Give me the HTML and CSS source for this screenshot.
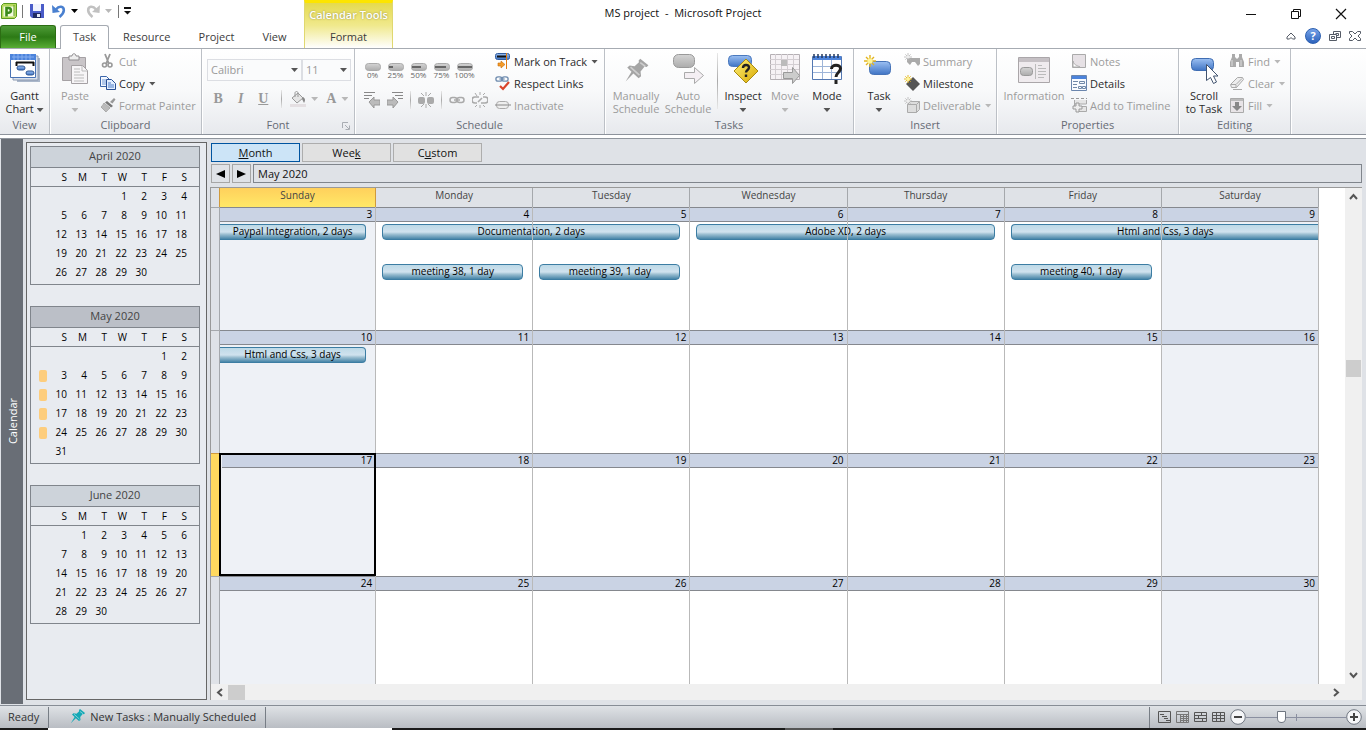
FILE: index.html
```html
<!DOCTYPE html>
<html lang="en">
<head>
<meta charset="utf-8">
<title>MS project - Microsoft Project</title>
<link rel="stylesheet" href="styles.css">
</head>
<body>
<svg class="defs" width="0" height="0" aria-hidden="true">
  <defs>
    <linearGradient id="blue" x1="0" y1="0" x2="0" y2="1"><stop offset="0" stop-color="#9cc0f2"/><stop offset="1" stop-color="#3f74c4"/></linearGradient>
    <linearGradient id="grey" x1="0" y1="0" x2="0" y2="1"><stop offset="0" stop-color="#d4d4d4"/><stop offset="1" stop-color="#acacac"/></linearGradient>
    <linearGradient id="gold" x1="0" y1="0" x2="1" y2="1"><stop offset="0" stop-color="#fff27a"/><stop offset="1" stop-color="#d8a800"/></linearGradient>
    <symbol id="spark" viewBox="0 0 12 12"><path d="M6 0v12M0 6h12M2 2l8 8M10 2l-8 8" stroke="#e3b51d" stroke-width="1.4"/><circle cx="6" cy="6" r="2.6" fill="#fff799"/></symbol>
    <symbol id="spark-off" viewBox="0 0 12 12"><path d="M6 0v12M0 6h12M2 2l8 8M10 2l-8 8" stroke="#b5b5b5" stroke-width="1.2"/><circle cx="6" cy="6" r="2.4" fill="#eee"/></symbol>
    <symbol id="pin" viewBox="0 0 16 16"><path d="M10 1l5 4-1 1.200-1.300-.3-2.500 3 .3 3-1.500 1.100L5.800 10.200 1 15l3.600-6L2 6.500l1.500-1.200 3 .4 2.700-2.400-.2-1.200z" fill="currentColor"/><path d="M10 3.500l3 2.200M4 6.200l5.500 5" stroke="#fff" stroke-opacity=".45" fill="none"/></symbol>
    <symbol id="chain" viewBox="0 0 16 8"><rect x="1" y="1.500" width="7" height="5" rx="2.500" fill="none" stroke="currentColor" stroke-width="1.500"/><rect x="8" y="1.500" width="7" height="5" rx="2.500" fill="none" stroke="currentColor" stroke-width="1.500"/><path d="M5 4h6" stroke="currentColor" stroke-width="1.500"/></symbol>
  </defs>
</svg>

<header class="header">
  <div class="quick-access">
    <svg width="16" height="16"><path d="M.5 2.500l2-2h13v13l-2 2H.5z" fill="#b5d95c" stroke="#5b9a1f"/><path d="M2.500 3.500h11v10h-11z" fill="#f3fae0"/><path d="M13 2v11" stroke="#5b9a1f"/><path d="M5.500 13.500V5h2a2.400 2.400 0 010 4.800H6" fill="none" stroke="#3b8a1b" stroke-width="2.600"/></svg>
    <i class="tick-sep"></i>
    <button aria-label="Save" class="save"><svg width="14" height="14"><path d="M0 0h14v14H2l-2-2z" fill="#4a5cc8"/><path d="M3 0h8v7H3z" fill="#f1f4fd"/><path d="M3 9h8v5H3z" fill="#202b63"/><path d="M7 10h3v3H7z" fill="#e5e9f5"/></svg></button>
    <button aria-label="Undo" class="gap-l"><svg width="14" height="14"><path d="M4 5.500C7 1.500 12 2 11.800 6.500c-.2 3-1.800 4.500-4.300 6.500" fill="none" stroke="#4a80d0" stroke-width="2.600"/><path d="M0 1l.5 8 7.500-1z" fill="#4a80d0"/></svg></button>
    <i class="arrow black"></i>
    <button aria-label="Redo" class="gap-l"><svg width="14" height="14"><path d="M10 5.500C7 1.500 2 2 2.200 6.500c.2 3 1.800 4.500 4.300 6.500" fill="none" stroke="#c1c1c1" stroke-width="2.600"/><path d="M14 1l-.5 8L6 8z" fill="#c1c1c1"/></svg></button>
    <i class="arrow pale"></i>
    <i class="tick-sep"></i>
    <button aria-label="Customize"><svg width="7" height="8"><path d="M0 1h7" stroke="#111" stroke-width="2"/><path d="M0 4h7L3.500 7.500z" fill="#111"/></svg></button>
  </div>
  <nav class="tabs">
    <button class="tab file">File</button>
    <button class="tab active">Task</button>
    <button class="tab">Resource</button>
    <button class="tab">Project</button>
    <button class="tab">View</button>
  </nav>
  <div class="context">
    <span class="context-title">Calendar Tools</span>
    <button class="tab">Format</button>
  </div>
  <h1 class="title">MS project&nbsp; -&nbsp; Microsoft Project</h1>
  <div class="window-buttons">
    <button aria-label="Minimize"><svg width="12" height="12"><path d="M1 6.500h10" stroke="#111"/></svg></button>
    <button aria-label="Restore"><svg width="12" height="12"><path d="M1.500 3.500h7v7h-7zM3.500 3.500v-2h7v7h-2" fill="none" stroke="#111"/></svg></button>
    <button aria-label="Close"><svg width="12" height="12"><path d="M1 1l10 10M11 1L1 11" stroke="#111" stroke-width="1.200"/></svg></button>
  </div>
  <div class="help-buttons">
    <button aria-label="Minimize ribbon"><svg width="12" height="12"><path d="M2 7l4-4 4 4v2H7.500L6 7.500 4.500 9H2z" fill="none" stroke="#555b66"/></svg></button>
    <button class="help" aria-label="Help">?</button>
    <button aria-label="Restore window"><svg width="12" height="12"><path d="M.5 4.500h7v6h-7zM2.500 6.500h3v2h-3zM4.500 4.500v-3h7v6h-4M6.500 3.500h3v2h-2" fill="none" stroke="#555b66"/></svg></button>
    <button aria-label="Close window"><svg width="12" height="12"><path d="M.5 1.500h3L6 4l2.500-2.500h3v2L9 6l2.500 2.500v2h-3L6 8l-2.500 2.500h-3v-2L3 6 .5 3.500z" fill="none" stroke="#555b66"/></svg></button>
  </div>
</header>

<section class="ribbon" aria-label="Task ribbon">
  <div class="group g-view">
    <div class="tools">
      <button class="large"><svg width="32" height="32"><path d="M8 5h23v24H8z" fill="#aab7ca"/><path d="M4 3h25v24H4z" fill="#dce3ee" stroke="#8c9ab0"/><path d="M1.500 1.500h25v23h-25z" fill="#fff" stroke="#4a73b4"/><path d="M1 1h26v6H1z" fill="#4c83db"/><path d="M5 1v6M9 1v6M13 1v6M17 1v6M21 1v6M3 4h22" stroke="#83adf0"/><path d="M7 9.500h18M7.500 9v4M24.500 9v4" stroke="#111" stroke-width="2"/><rect x="8" y="13" width="8" height="4" rx="2" fill="url(#blue)" stroke="#2d5592"/><rect x="17" y="18" width="8" height="4" rx="2" fill="url(#blue)" stroke="#2d5592"/></svg><span>Gantt<br>Chart <i class="arrow"></i></span></button>
    </div>
    <h2>View</h2>
  </div>

  <div class="group g-clip">
    <div class="tools">
      <button class="large off" disabled><svg width="32" height="32"><path d="M3.500 4.500h23v23h-23z" fill="#c9c5c8" stroke="#a5a1a4"/><path d="M10 7V3h3c0-3 4-3 4 0h3v4z" fill="#eee" stroke="#8f8c8f"/><path d="M12.500 12.500h11l5 5v13h-16z" fill="#f7f5f7" stroke="#a5a1a4"/><path d="M23 13v5h5M15 16h6M15 19h6M15 22h10M15 25h10M15 28h10" fill="none" stroke="#bbb"/></svg><span>Paste<br><i class="arrow pale"></i></span></button>
      <div class="stack">
        <button class="small off" disabled><svg width="16" height="16"><path d="M5 1l4 10M10 1L6 11" stroke="#999" stroke-width="1.800"/><circle cx="4.500" cy="12" r="2" fill="none" stroke="#999" stroke-width="1.600"/><circle cx="10" cy="12" r="2" fill="none" stroke="#999" stroke-width="1.600"/></svg>Cut</button>
        <button class="small"><svg width="16" height="16"><path d="M.5 1.500h6l3 3v7h-9z" fill="#f4f8ff" stroke="#3b66ab"/><path d="M2 5h4M2 7h4M2 9h4" stroke="#7199d6"/><path d="M6.500 4.500h5l4 4v6h-9z" fill="#e3eeff" stroke="#284f94"/><path d="M8 8h3M8 10h6M8 12h6" stroke="#4d7cc7"/></svg>Copy <i class="arrow"></i></button>
        <button class="small off" disabled><svg width="16" height="16"><path d="M10 5l4-4 1.500 1.500-3 4z" fill="#999"/><path d="M7 4l6 5-2 1.500-6-5z" fill="#777"/><path d="M4 6l6 5c-2 2-3 3-4 4L1 10c1-1 2-2 3-4z" fill="#bbb" stroke="#aaa"/></svg>Format Painter</button>
      </div>
    </div>
    <h2>Clipboard</h2>
  </div>

  <div class="group g-font">
    <div class="tools column">
      <div class="combos">
        <label class="combo wide"><select aria-label="Font" disabled><option>Calibri</option></select><i class="arrow"></i></label>
        <label class="combo"><select aria-label="Font size" disabled><option>11</option></select><i class="arrow"></i></label>
      </div>
      <div class="format-row">
        <button class="letter bold" disabled>B</button>
        <button class="letter italic" disabled>I</button>
        <button class="letter underline" disabled>U</button>
        <i class="fade-sep"></i>
        <button class="with-arrow" disabled aria-label="Background color"><svg width="16" height="16"><path d="M2 7l6-5 5 5-6 5z" fill="#e5e5e5" stroke="#999"/><path d="M5 6V2c0-2 3-2 3 0v4" fill="none" stroke="#999"/><path d="M13 6c3 2 2 4 1 6l-2-4z" fill="#888"/><path d="M0 13h16v3H0z" fill="#e4dfe2"/></svg><i class="arrow pale"></i></button>
        <button class="with-arrow letter" disabled>A<i class="arrow pale"></i></button>
      </div>
    </div>
    <h2>Font <svg class="launcher" width="8" height="8"><path d="M.5 6V.5H6M3 3l4 4M7.500 3.500v4h-4" fill="none" stroke="#a9adb3"/></svg></h2>
  </div>

  <div class="group g-schedule">
    <div class="tools">
      <div class="schedule-tools">
        <div class="percents">
          <button disabled><svg width="16" height="8"><rect x=".5" y=".5" width="15" height="7" rx="3" fill="url(#grey)" stroke="#aaa"/></svg>0%</button>
          <button disabled><svg width="16" height="8"><rect x=".5" y=".5" width="15" height="7" rx="3" fill="url(#grey)" stroke="#aaa"/><path d="M1 4h4" stroke="#666" stroke-width="2"/></svg>25%</button>
          <button disabled><svg width="16" height="8"><rect x=".5" y=".5" width="15" height="7" rx="3" fill="url(#grey)" stroke="#aaa"/><path d="M1 4h9" stroke="#666" stroke-width="2"/></svg>50%</button>
          <button disabled><svg width="16" height="8"><rect x=".5" y=".5" width="15" height="7" rx="3" fill="url(#grey)" stroke="#aaa"/><path d="M1 4h11" stroke="#666" stroke-width="2"/></svg>75%</button>
          <button disabled><svg width="16" height="8"><rect x=".5" y=".5" width="15" height="7" rx="3" fill="url(#grey)" stroke="#aaa"/><path d="M1 4h14" stroke="#666" stroke-width="2"/></svg>100%</button>
        </div>
        <div class="link-row">
          <button disabled aria-label="Outdent"><svg width="16" height="16"><path d="M0 .5h11M0 3.500h8M0 6.500h5" stroke="#888"/><path d="M5 10l5-5v3h6v5h-6v3z" fill="#bbb" stroke="#999"/></svg></button>
          <button disabled aria-label="Indent"><svg width="16" height="16"><path d="M5 .5h11M8 3.500h8M11 6.500h5" stroke="#888"/><path d="M11 10L6 5v3H0v5h6v3z" fill="#bbb" stroke="#999"/></svg></button>
          <i class="fade-sep"></i>
          <button disabled aria-label="Split task"><svg width="16" height="16"><rect x="0" y="5" width="7" height="7" rx="2" fill="#aaa"/><rect x="9" y="5" width="7" height="7" rx="2" fill="#aaa"/><path d="M8 0v4M8 12v4M3 1l3 3M13 1l-3 3M3 15l3-3M13 15l-3-3" stroke="#aaa"/></svg></button>
          <i class="fade-sep"></i>
          <button disabled aria-label="Link tasks"><svg width="16" height="8" color="#aaa"><use href="#chain"/></svg></button>
          <button disabled aria-label="Unlink tasks"><svg width="16" height="16" fill="none" stroke="#aaa"><path d="M7 5H3a2.500 2.500 0 000 6h2M9 11h4a2.500 2.500 0 000-6h-2M6 10l4-4" stroke-width="1.600"/><path d="M8 0v3M8 13v3M3 1l2 3M13 1l-2 2M3 15l2-2M13 15l-2-2"/></svg></button>
        </div>
      </div>
      <div class="stack">
        <button class="small"><svg width="16" height="16"><rect x=".5" y=".5" width="14" height="6" rx="2" fill="url(#blue)" stroke="#315c9f"/><path d="M2 3.500h9" stroke="#111" stroke-width="2"/><path d="M11.500 0v16" stroke="#e07b12"/><path d="M3 10h3V8l4 3.500L6 15v-2H3z" fill="#f49b28" stroke="#c86b08" stroke-width=".6"/></svg>Mark on Track <i class="arrow"></i></button>
        <button class="small"><svg width="16" height="16"><svg width="14" height="8" color="#6f8caf"><use href="#chain"/></svg><path d="M5 11l3 3 6-7" fill="none" stroke="#d9442a" stroke-width="2.200"/></svg>Respect Links</button>
        <button class="small off" disabled><svg width="16" height="16"><rect x="1.500" y="4.500" width="12" height="7" rx="3" fill="#eee" stroke="#aaa"/><path d="M0 8h16" stroke="#888"/></svg>Inactivate</button>
      </div>
    </div>
    <h2>Schedule</h2>
  </div>

  <div class="group g-tasks">
    <div class="tools">
      <button class="large mid off" disabled><svg width="32" height="32"><svg x="4" y="4" width="26" height="26" color="#a5a5a5"><use href="#pin"/></svg></svg><span>Manually<br>Schedule</span></button>
      <button class="large mid off" disabled><svg width="32" height="32"><rect x="1.500" y="1.500" width="21" height="13" rx="5" fill="url(#grey)" stroke="#999"/><path d="M12.500 19.500h10v-5l9 8-9 8v-5h-10z" fill="#f4eff3" stroke="#aaa"/></svg><span>Auto<br>Schedule</span></button>
      <i class="fade-sep tall"></i>
      <button class="large"><svg width="32" height="32"><rect x="1.500" y="2.500" width="23" height="11" rx="4" fill="url(#blue)" stroke="#4a79be"/><path d="M19 6l12 12-12 12L7 18z" fill="url(#gold)" stroke="#a88a12"/><path d="M16 15c0-4 6-4 6-.5 0 2.500-3 2.500-3 5M19 21.500v2.500" fill="none" stroke="#222" stroke-width="2.400"/></svg><span>Inspect<br><i class="arrow"></i></span></button>
      <button class="large off" disabled><svg width="32" height="32"><path d="M1.500 1.500h29v25h-29z" fill="#f6f2f5" stroke="#b5b0b4"/><path d="M1 6.500h29M1 11.500h29M1 16.500h29M1 21.500h29M6.500 1v25M12.500 1v25M18.500 1v25M24.500 1v25" stroke="#d3ced2"/><path d="M12 7h6v6h-6z" fill="#bbb"/><path d="M14.500 19.500h9v-5l7 8-7 8v-5h-9z" fill="#ccc" stroke="#999"/></svg><span>Move<br><i class="arrow pale"></i></span></button>
      <button class="large"><svg width="32" height="32"><path d="M1.500 3.500h29v23h-29z" fill="#fff" stroke="#5478b1"/><path d="M2 3h28v4H2z" fill="#4c83db"/><path d="M2 13.500h28M2 19.500h28M11.500 7v19M20.500 7v19" stroke="#9eb5d8"/><path d="M3 1v4M7 1v4M11 1v4M15 1v4M19 1v4M23 1v4M27 1v4" stroke="#23395e" stroke-width="1.500"/><path d="M20.500 16c0-5 9-5 9-.5 0 4-4.500 4-4.500 8.500M25 27v4" fill="none" stroke="#222" stroke-width="3"/></svg><span>Mode<br><i class="arrow"></i></span></button>
    </div>
    <h2>Tasks</h2>
  </div>

  <div class="group g-insert">
    <div class="tools">
      <button class="large"><svg width="32" height="32"><rect x="6.500" y="8.500" width="21" height="13" rx="4" fill="url(#blue)" stroke="#4673b7"/><svg x="1" y="2" width="12" height="12"><use href="#spark"/></svg></svg><span>Task<br><i class="arrow"></i></span></button>
      <div class="stack">
        <button class="small off" disabled><svg width="16" height="16"><path d="M3 5h13v6l-2 2-3-4H8l-2 3-3-3z" fill="#aaa"/><svg width="8" height="8"><use href="#spark-off"/></svg></svg>Summary</button>
        <button class="small"><svg width="16" height="16"><path d="M9 2l7 7-7 7-7-7z" fill="#555"/><svg width="8" height="8"><use href="#spark"/></svg></svg>Milestone</button>
        <button class="small off" disabled><svg width="16" height="16"><path d="M3.500 7.500h9v8h-9zM3.500 7.500l3-3h9v8l-3 3M12.500 7.500l3-3" fill="#ddd" stroke="#aaa"/><svg width="8" height="8"><use href="#spark-off"/></svg></svg>Deliverable <i class="arrow pale"></i></button>
      </div>
    </div>
    <h2>Insert</h2>
  </div>

  <div class="group g-props">
    <div class="tools">
      <button class="large mid off" disabled><svg width="32" height="32"><path d="M.5 4.500h31v25H.5z" fill="#efebee" stroke="#aaa6a9"/><path d="M1 5h30v4H1z" fill="#c5c0c4"/><rect x="2.500" y="14.500" width="12" height="8" rx="3" fill="url(#grey)" stroke="#999"/><path d="M17.500 11v15M20 12.500h4M20 15.500h8M20 18.500h8M20 21.500h8M20 24.500h6" stroke="#bbb"/></svg><span>Information</span></button>
      <div class="stack">
        <button class="small off" disabled><svg width="16" height="16"><path d="M1.500 1.500h13v13h-13z" fill="#e6e1e5" stroke="#aaa"/><path d="M2 8c1 4 3 4 7 6H2z" fill="#fff" stroke="#aaa"/></svg>Notes</button>
        <button class="small"><svg width="16" height="16"><path d="M.5.5h15v15H.5z" fill="#f8fbff" stroke="#6b86ad"/><path d="M1 1h14v3H1z" fill="#4c83db"/><path d="M2 6.500h5M2 9.500h4M2 12.500h4M8.500 6.500h5v2h-5zM7.500 11.500h3v2h-3zM11.500 11.500h3v2h-3z" fill="none" stroke="#7189a8"/></svg>Details</button>
        <button class="small off" disabled><svg width="16" height="16"><path d="M0 1.500h16" stroke="#999" stroke-dasharray="3 2"/><path d="M3.500 3v4h12V3M3.500 7v3M6.500 9.500h9v5h-9z" fill="#e5e5e5" stroke="#aaa"/><path d="M5 6h3v3h3v3H8v3H5v-3H2V9h3z" fill="#eee" stroke="#999"/></svg>Add to Timeline</button>
      </div>
    </div>
    <h2>Properties</h2>
  </div>

  <div class="group g-edit">
    <div class="tools">
      <button class="large"><svg width="32" height="32"><rect x="3.500" y="5.500" width="22" height="12" rx="4" fill="url(#blue)" stroke="#3f6db2"/><path d="M18.500 11.500v16l4-3 3 6 3-1.500-3-6h4.500z" fill="#fff" stroke="#41536e"/></svg><span>Scroll<br>to Task</span></button>
      <div class="stack">
        <button class="small off" disabled><svg width="16" height="16"><path d="M3 1h3v3l2 2 2-2V1h3v3l2 5v5h-5V9H7v5H1V9l2-5z" fill="#aaa"/><path d="M3 7v6M12 7v6" stroke="#ddd"/></svg>Find <i class="arrow pale"></i></button>
        <button class="small off" disabled><svg width="16" height="16"><path d="M1.500 9.500l7-7h5l1 2-7 8h-5z" fill="#eee" stroke="#aaa"/><path d="M2 9.500h5l6-6M7 10v3M4 14.500h9" fill="none" stroke="#aaa"/></svg>Clear <i class="arrow pale"></i></button>
        <button class="small off" disabled><svg width="16" height="16"><path d="M1.500 1.500h13v14h-13z" fill="#e8e4e7" stroke="#aaa"/><path d="M2 2h12v2H2z" fill="#bbb"/><path d="M6 5h4v4h3l-5 5-5-5h3z" fill="#888"/></svg>Fill <i class="arrow pale"></i></button>
      </div>
    </div>
    <h2>Editing</h2>
  </div>
</section>

<main class="workspace">
  <div class="view-bar"><span>Calendar</span></div>
  <aside class="months">
    <table class="month">
      <caption>April 2020</caption>
      <thead><tr><th></th><th>S</th><th>M</th><th>T</th><th>W</th><th>T</th><th>F</th><th>S</th></tr></thead>
      <tbody>
        <tr><td></td><td></td><td></td><td></td><td>1</td><td>2</td><td>3</td><td>4</td></tr>
        <tr><td></td><td>5</td><td>6</td><td>7</td><td>8</td><td>9</td><td>10</td><td>11</td></tr>
        <tr><td></td><td>12</td><td>13</td><td>14</td><td>15</td><td>16</td><td>17</td><td>18</td></tr>
        <tr><td></td><td>19</td><td>20</td><td>21</td><td>22</td><td>23</td><td>24</td><td>25</td></tr>
        <tr><td></td><td>26</td><td>27</td><td>28</td><td>29</td><td>30</td><td></td><td></td></tr>
      </tbody>
    </table>
    <table class="month current">
      <caption>May 2020</caption>
      <thead><tr><th></th><th>S</th><th>M</th><th>T</th><th>W</th><th>T</th><th>F</th><th>S</th></tr></thead>
      <tbody>
        <tr><td></td><td></td><td></td><td></td><td></td><td></td><td>1</td><td>2</td></tr>
        <tr><td><i class="mark"></i></td><td>3</td><td>4</td><td>5</td><td>6</td><td>7</td><td>8</td><td>9</td></tr>
        <tr><td><i class="mark"></i></td><td>10</td><td>11</td><td>12</td><td>13</td><td>14</td><td>15</td><td>16</td></tr>
        <tr><td><i class="mark"></i></td><td>17</td><td>18</td><td>19</td><td>20</td><td>21</td><td>22</td><td>23</td></tr>
        <tr><td><i class="mark"></i></td><td>24</td><td>25</td><td>26</td><td>27</td><td>28</td><td>29</td><td>30</td></tr>
        <tr><td></td><td>31</td><td></td><td></td><td></td><td></td><td></td><td></td></tr>
      </tbody>
    </table>
    <table class="month">
      <caption>June 2020</caption>
      <thead><tr><th></th><th>S</th><th>M</th><th>T</th><th>W</th><th>T</th><th>F</th><th>S</th></tr></thead>
      <tbody>
        <tr><td></td><td></td><td>1</td><td>2</td><td>3</td><td>4</td><td>5</td><td>6</td></tr>
        <tr><td></td><td>7</td><td>8</td><td>9</td><td>10</td><td>11</td><td>12</td><td>13</td></tr>
        <tr><td></td><td>14</td><td>15</td><td>16</td><td>17</td><td>18</td><td>19</td><td>20</td></tr>
        <tr><td></td><td>21</td><td>22</td><td>23</td><td>24</td><td>25</td><td>26</td><td>27</td></tr>
        <tr><td></td><td>28</td><td>29</td><td>30</td><td></td><td></td><td></td><td></td></tr>
      </tbody>
    </table>
  </aside>

  <section class="calendar">
    <div class="modes">
      <button class="selected"><u>M</u>onth</button>
      <button>Wee<u>k</u></button>
      <button>C<u>u</u>stom</button>
    </div>
    <div class="period">
      <button aria-label="Previous month"><svg width="9" height="8"><path d="M9 0v8L0 4z"/></svg></button>
      <button aria-label="Next month"><svg width="9" height="8"><path d="M0 0v8l9-4z"/></svg></button>
      <div class="period-name">May 2020</div>
    </div>
    <div class="sheet">
      <div class="grid">
        <div class="weekdays">
          <span class="today">Sunday</span><span>Monday</span><span>Tuesday</span><span>Wednesday</span><span>Thursday</span><span>Friday</span><span>Saturday</span>
        </div>
        <div class="week">
          <div class="day weekend d1"><b>3</b></div><div class="day d2"><b>4</b></div><div class="day d3"><b>5</b></div><div class="day d4"><b>6</b></div><div class="day d5"><b>7</b></div><div class="day d6"><b>8</b></div><div class="day weekend d7"><b>9</b></div>
          <div class="event from-prev at-sun">Paypal Integration, 2 days</div>
          <div class="event at-mon span-2">Documentation, 2 days</div>
          <div class="event at-wed span-2">Adobe XD, 2 days</div>
          <div class="event to-next at-fri span-2">Html and Css, 3 days</div>
          <div class="event second at-mon">meeting 38, 1 day</div>
          <div class="event second at-tue">meeting 39, 1 day</div>
          <div class="event second at-fri">meeting 40, 1 day</div>
        </div>
        <div class="week">
          <div class="day weekend d1"><b>10</b></div><div class="day d2"><b>11</b></div><div class="day d3"><b>12</b></div><div class="day d4"><b>13</b></div><div class="day d5"><b>14</b></div><div class="day d6"><b>15</b></div><div class="day weekend d7"><b>16</b></div>
          <div class="event from-prev at-sun">Html and Css, 3 days</div>
        </div>
        <div class="week chosen">
          <div class="day weekend d1 picked"><b>17</b></div><div class="day d2"><b>18</b></div><div class="day d3"><b>19</b></div><div class="day d4"><b>20</b></div><div class="day d5"><b>21</b></div><div class="day d6"><b>22</b></div><div class="day weekend d7"><b>23</b></div>
        </div>
        <div class="week last">
          <div class="day weekend d1"><b>24</b></div><div class="day d2"><b>25</b></div><div class="day d3"><b>26</b></div><div class="day d4"><b>27</b></div><div class="day d5"><b>28</b></div><div class="day d6"><b>29</b></div><div class="day weekend d7"><b>30</b></div>
        </div>
      </div>
      <div class="v-scroll">
        <button aria-label="Scroll up"><svg width="9" height="7"><path d="M1 6l3.500-4L8 6" fill="none" stroke="#555" stroke-width="2"/></svg></button>
        <i class="thumb"></i>
        <button aria-label="Scroll down"><svg width="9" height="7"><path d="M1 1l3.500 4L8 1" fill="none" stroke="#555" stroke-width="2"/></svg></button>
      </div>
      <div class="h-scroll">
        <button aria-label="Scroll left"><svg width="7" height="9"><path d="M6 1L2 4.500 6 8" fill="none" stroke="#555" stroke-width="2"/></svg></button>
        <i class="thumb"></i>
        <button aria-label="Scroll right" class="end"><svg width="7" height="9"><path d="M1 1l4 3.500L1 8" fill="none" stroke="#555" stroke-width="2"/></svg></button>
      </div>
    </div>
  </section>
</main>

<footer class="status">
  <span class="ready">Ready</span>
  <button class="task-mode"><svg width="16" height="16" color="#15a8b5"><use href="#pin"/></svg>New Tasks : Manually Scheduled</button>
  <div class="view-buttons">
    <button aria-label="Gantt chart"><svg width="13" height="12"><path d="M.5.5h12v11H.5zM2 3.500h4M4 5.500h5M6 7.500h4M8 9.500h4" fill="none" stroke="#555"/></svg></button>
    <button aria-label="Task usage"><svg width="13" height="12"><path d="M.5.5h12v11H.5zM0 3.500h13M4.500 3v8M7.500 3v8M10.500 3v8M4 5.500h9M4 7.500h9M4 9.500h9" fill="none" stroke="#777"/></svg></button>
    <button aria-label="Team planner"><svg width="13" height="12"><path d="M.5 1.500h12v9H.5zM0 4.500h13M0 7.500h13M7.500 2v2M4.500 5v3M8.500 8v2" fill="none" stroke="#555"/></svg></button>
    <button aria-label="Resource sheet"><svg width="13" height="12"><path d="M.5 1.500h12v9H.5zM0 4.500h13M0 7.500h13M4.500 1v9M8.500 1v9" fill="none" stroke="#555"/></svg></button>
  </div>
  <button class="zoom" aria-label="Zoom out"><svg width="16" height="16"><circle cx="8" cy="8" r="7.300" fill="#f5f6f8" stroke="#6f7680"/><path d="M4 8h8" stroke="#444" stroke-width="2"/></svg></button>
  <input class="slider" type="range" aria-label="Zoom" value="34">
  <button class="zoom" aria-label="Zoom in"><svg width="16" height="16"><circle cx="8" cy="8" r="7.300" fill="#f5f6f8" stroke="#6f7680"/><path d="M4 8h8M8 4v8" stroke="#444" stroke-width="2"/></svg></button>
</footer>
<div class="taskbar-edge"></div>
</body>
</html>
```
FILE: styles.css
```css
* { box-sizing: border-box; }
body {
  margin: 0; height: 100vh; overflow: hidden;
  display: flex; flex-direction: column;
  font: 11px/13px "Open Sans", "Noto Sans", sans-serif;
  color: #2b2b2b; background: #fff;
}
button { font: inherit; color: inherit; background: none; border: 0; padding: 0; margin: 0; }
h1, h2 { margin: 0; font: inherit; }
svg { display: block; flex: none; }
.defs { position: absolute; }
i { font-style: normal; }
.arrow {
  display: inline-block; vertical-align: middle; width: 7px; height: 4px; flex: none;
  background: #555; clip-path: polygon(0 0, 100% 0, 50% 100%);
}
.arrow.black { background: #000; }
.arrow.pale { background: #b8b8b8; }

/* Title bar and tabs */
.header {
  flex: none; display: grid;
  grid-template-columns: 304px 89px 1fr; grid-template-rows: 25px 24px;
  border-bottom: 1px solid #a6abb2; height: 49px;
}
.quick-access { grid-area: 1 / 1; display: flex; align-items: center; gap: 5px; padding: 0 1px; height: 22px; }
.quick-access .save { margin: 0 3px 0 2px; }
.quick-access .gap-l:not(:nth-child(4)) { margin-left: 2px; }
.quick-access .arrow { margin-right: 1px; }
.tick-sep { width: 1px; height: 13px; background: #777; }
.tabs { grid-area: 2 / 1; display: flex; }
.tab { height: 23px; padding: 0 14px 1px; color: #3b3b3b; }
.tab.file { width: 56px; padding: 0 0 1px; margin-right: 4px; color: #fff; border: 1px solid #2c6d13; border-bottom: 0; border-radius: 3px 3px 0 0; background: linear-gradient(#4e9b37, #2c7a15 50%, #58ad35); }
.tab.active { width: 49px; height: 24px; padding: 0 0 2px; background: #fff; border: 1px solid #a6abb2; border-bottom: 0; border-radius: 3px 3px 0 0; color: #444; }
.context {
  grid-area: 1 / 2 / 3 / 3; display: flex; flex-direction: column; align-items: center;
  border: solid #e0d870; border-width: 3px 1px 0; border-top-color: #fde500;
  background: linear-gradient(#e5da4e, #f0e98d 50%, #fff); height: 48px;
}
.context-title { height: 22px; line-height: 24px; color: #fff; font-weight: 600; white-space: nowrap; text-shadow: 0 0 2px #8c8742; }
.context .tab { padding: 0 0 1px; }
.title { grid-area: 1 / 1 / 2 / 4; justify-self: center; align-self: center; color: #111; }
.window-buttons { grid-area: 1 / 3; justify-self: end; display: flex; align-items: center; gap: 33px; padding: 3px 19px 0 0; z-index: 1; }
.help-buttons { grid-area: 2 / 3; justify-self: end; display: flex; align-items: center; gap: 8px; padding: 0 5px 2px 0; }
.help { width: 16px; height: 16px; border-radius: 50%; border: 1px solid #2c5fb0; background: linear-gradient(#75a2e8, #2d63bd); color: #fff; font-weight: 700; line-height: 14px; }

/* Ribbon */
.ribbon { flex: none; display: flex; height: 86px; border-bottom: 1px solid #8d939c; background: linear-gradient(#fff, #f8f9fa 50%, #e7e9ed); }
.group { flex: none; display: flex; flex-direction: column; border-right: 1px solid #bcc0c6; box-shadow: 1px 0 #fff; }
.group h2 { height: 17px; text-align: center; color: #666b74; position: relative; line-height: 16px; }
.tools { flex: 1; display: flex; padding-top: 2px; }
.tools.column { flex-direction: column; }
.g-view { width: 50px; }
.g-clip { width: 152px; }
.g-font { width: 153px; }
.g-schedule { width: 250px; }
.g-tasks { width: 249px; }
.g-insert { width: 143px; }
.g-props { width: 182px; }
.g-edit { width: 112px; }
.large { width: 50px; height: 66px; display: flex; flex-direction: column; align-items: center; gap: 4px; padding-top: 2px; white-space: nowrap; }
.g-tasks .large { width: 42px; }
.g-tasks .large.mid { width: 52px; }
.g-tasks .tools { padding-left: 5px; }
.g-props .large.mid { width: 74px; }
.off { color: #9c9c9c; }
.stack { display: flex; flex-direction: column; }
.small { display: flex; align-items: center; gap: 3px; height: 22px; padding-bottom: 2px; white-space: nowrap; }
.small .arrow { margin: 1px 0 0 1px; }
.combos { display: flex; padding: 8px 0 0 5px; }
.combo { position: relative; width: 49px; height: 22px; }
.combo.wide { width: 95px; }
.combo select { width: 100%; height: 22px; padding: 0 3px 2px; appearance: none; border: 1px solid #dcdee3; border-radius: 0; background: #fafbfc; color: #999; opacity: 1; font: inherit; }
.combo .arrow { position: absolute; right: 4px; top: 9px; }
.format-row { display: flex; align-items: center; height: 36px; padding-left: 5px; }
.letter { width: 23px; color: #999; font: 700 14px "Liberation Serif", serif; }
.letter.italic { font-style: italic; }
.letter.underline { text-decoration: underline; }
.with-arrow { display: flex; align-items: center; justify-content: center; gap: 5px; width: 34px; }
.fade-sep { width: 1px; height: 18px; margin: 0 7px; background: linear-gradient(#e8e8e8, #aaa, #e8e8e8); flex: none; }
.fade-sep.tall { height: 56px; margin: 2px 4px 0 3px; }
.format-row .fade-sep { margin: 0 6px; }
.launcher { position: absolute; right: 4px; top: 5px; }
.schedule-tools { width: 140px; }
.percents { display: grid; grid-template-columns: repeat(5, 23px); padding: 12px 0 0 6px; }
.percents button { display: flex; flex-direction: column; align-items: center; color: #666; font-size: 8px; line-height: 8px; }
.link-row { display: flex; align-items: center; gap: 7px; padding: 10px 0 0 9px; height: 32px; }
.link-row .fade-sep { margin: 0; }

/* Work area */
.workspace { flex: 1; min-height: 0; display: flex; margin-top: 3px; padding: 0 4px 5px 1px; border-top: 1px solid #8f959d; background: #dfe2e7; }
.view-bar { width: 22px; margin-bottom: -4px; background: #696e76; color: #fff; display: flex; justify-content: center; align-items: center; }
.view-bar span { writing-mode: vertical-rl; transform: rotate(180deg); }
.months { width: 181px; margin: 3px 0 0 3px; padding: 3px; border: 1px solid #666; background: #e8ebf0; }
.month {
  width: 170px; table-layout: fixed; border-collapse: separate; border-spacing: 0; margin-bottom: 21px;
  border: 1px solid #80858c; padding: 0 12px 2px 0; font-size: 10px; color: #000;
  background: linear-gradient(#80858c, #80858c) 0 18px / 100% 1px no-repeat;
}
.month caption { height: 21px; line-height: 17px; font-size: 11px; color: #444; border: 1px solid #80858c; border-bottom: 0; background: #cdd3da; }
.month.current caption { background: #bbbfc7; }
.month th, .month td { width: 20px; height: 19px; line-height: 19px; padding: 0; text-align: right; font-weight: 400; }
.month th:first-child { width: 16px; }
.mark { display: block; width: 8px; height: 12px; margin-left: 8px; border-radius: 2px; background: #fdcd7d; }

.calendar { flex: 1; min-width: 0; display: flex; flex-direction: column; padding: 4px 0 0 3px; }
.modes { display: flex; gap: 2px; padding-left: 1px; }
.modes button { width: 89px; height: 19px; border: 1px solid #adadad; background: #e1e1e1; color: #111; }
.modes .selected { background: #cce4f7; border-color: #0054a0; }
.period { display: flex; gap: 2px; padding: 2px 0 4px 1px; height: 25px; }
.period button { width: 19px; height: 19px; border: 1px solid #a6a6a6; display: flex; align-items: center; justify-content: center; }
.period-name { flex: 1; height: 19px; border: 1px solid #80858c; padding-left: 4px; line-height: 17px; color: #111; }
.sheet { flex: 1; min-height: 0; display: grid; grid-template: minmax(0, 1fr) 16px / 1fr 17px; border: solid #999; border-width: 1px 0 0 1px; background: #fff; }
.grid { display: flex; flex-direction: column; padding-right: 26px; overflow: hidden; }
.weekdays, .week { display: grid; grid-template-columns: repeat(7, 1fr); padding-left: 8px; }
.weekdays { flex: none; height: 19px; background: #dfe2e7; color: #444; font-size: 10px; text-align: center; line-height: 14px; }
.weekdays span { border-right: 1px solid #a5a8ac; }
.weekdays .today { background: linear-gradient(#ffd05c, #ffe867); border: solid #d09a3c; border-width: 0 1px 0 1px; }
.week {
  flex: none; height: 123px; grid-template-rows: 17px 40px 1fr; font-size: 10px;
  background: linear-gradient(#a5a8ac, #a5a8ac) 0 0 / 8px 1px no-repeat, linear-gradient(#dfe2e7, #dfe2e7) 0 0 / 8px 100% no-repeat;
}
.week.last { flex: 1; }
.week.chosen { background: linear-gradient(#d09a3c, #d09a3c) 0 0 / 8px 1px no-repeat, linear-gradient(#ffd95f, #ffd95f) 0 0 / 8px 100% no-repeat; }
.day { grid-row: 1 / -1; position: relative; color: #000; }
.day::after { content: ""; position: absolute; z-index: 2; right: 0; top: 0; bottom: 0; width: 1px; background: #b9b9b9; }
.day b { display: block; height: 15px; border: solid #85888e; border-width: 1px 0; background: #cad3e4; text-align: right; padding-right: 4px; font-weight: 400; line-height: 12px; }
.weekend { background: #eef1f6; }
.d1 { grid-column: 1; border-left: 1px solid #a5a8ac; } .d2 { grid-column: 2; } .d3 { grid-column: 3; } .d4 { grid-column: 4; }
.d5 { grid-column: 5; } .d6 { grid-column: 6; } .d7 { grid-column: 7; }
.picked { outline: 2px solid #000; outline-offset: -2px; }
.picked::after { display: none; }
.picked b { margin: 0 2px; padding-right: 2px; }
.event {
  grid-row: 2; z-index: 1; height: 16px; margin: 0 10px 0 6px; text-align: center; line-height: 13px; color: #000;
  border: 1px solid #3c7da3; border-radius: 4px;
  background: linear-gradient(#bdd9e7, #d0e2ee 50%, #9fc1d3 65%, #4785a8);
}
.event.second { grid-row: 3; }
.at-sun { grid-column: 1; } .at-mon { grid-column: 2; } .at-tue { grid-column: 3; }
.at-wed { grid-column: 4; } .at-fri { grid-column: 6; }
.at-mon.span-2 { grid-column: 2 / 4; } .at-wed.span-2 { grid-column: 4 / 6; } .at-fri.span-2 { grid-column: 6 / 8; }
.from-prev { margin-left: 1px; border-left: 0; border-radius: 0 4px 4px 0; }
.to-next { margin-right: 0; border-right: 0; border-radius: 4px 0 0 4px; }
.v-scroll, .h-scroll { background: #f0f0f0; }
.v-scroll { display: grid; grid-template-rows: 17px 155fr 17px 289fr 17px; justify-items: center; }
.h-scroll { grid-column: 1 / 3; display: flex; align-items: center; padding-right: 17px; }
.v-scroll button, .h-scroll button { width: 17px; height: 17px; display: flex; align-items: center; justify-content: center; }
.thumb { background: #cdcdcd; }
.v-scroll .thumb { grid-row: 3; width: 15px; height: 17px; }
.v-scroll button:last-child { grid-row: 5; }
.h-scroll .thumb { width: 17px; height: 15px; }
.h-scroll .end { margin-left: auto; }

/* Status bar */
.status { flex: none; height: 23px; display: flex; align-items: center; padding-right: 4px; border-top: 1px solid #878d96; background: linear-gradient(#dfe2e6, #b9bdc3); color: #333; }
.ready { height: 21px; line-height: 20px; padding: 0 9px 0 8px; border-right: 1px solid #777d85; }
.task-mode { display: flex; align-items: center; gap: 4px; height: 21px; padding: 0 9px 2px 21px; border-right: 1px solid #777d85; }
.view-buttons { margin-left: auto; display: flex; align-items: center; gap: 5px; height: 21px; padding: 0 5px 0 8px; border-left: 1px solid #777d85; }
.slider { appearance: none; width: 100px; height: 16px; margin: 0; background: linear-gradient(#8a8fa0, #8a8fa0) 0 50% / 100% 1px no-repeat, linear-gradient(#8a8fa0, #8a8fa0) 50% 50% / 1px 7px no-repeat; }
.slider::-webkit-slider-thumb { appearance: none; width: 9px; height: 12px; border: 1px solid #6f7680; border-radius: 1px 1px 5px 5px; background: #fff; }
.taskbar-edge { flex: none; height: 2px; background: linear-gradient(90deg, #1b1b1b 48px, #fff 48px, #fff 392px, #1b1b1b 392px, #1b1b1b 785px, #555 785px, #555 833px, #1b1b1b 833px); }
```
